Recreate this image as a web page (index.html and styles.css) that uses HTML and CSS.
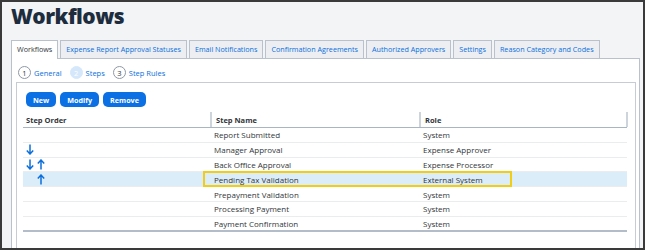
FILE: index.html
```html
<!DOCTYPE html>
<html lang="en">
<head>
  <meta charset="UTF-8"/>
  <title>Workflows</title>
  <link rel="stylesheet" href="styles.css">
</head>
<body>
  <div class="frame">
    <h1>Workflows</h1>
    <div class="tabs">
      <div class="tab active">Workflows</div>
      <div class="tab">Expense Report Approval Statuses</div>
      <div class="tab">Email Notifications</div>
      <div class="tab">Confirmation Agreements</div>
      <div class="tab">Authorized Approvers</div>
      <div class="tab">Settings</div>
      <div class="tab">Reason Category and Codes</div>
    </div>
    <div class="panel">
      <div class="steps">
        <div class="step"><span class="num">1</span>General</div>
        <div class="step"><span class="num current">2</span>Steps</div>
        <div class="step"><span class="num">3</span>Step Rules</div>
      </div>
      <div class="box">
        <div class="toolbar">
          <button class="btn">New</button>
          <button class="btn">Modify</button>
          <button class="btn">Remove</button>
        </div>
        <div class="grid">
          <div class="row head">
            <div class="cell">Step Order</div>
            <div class="cell">Step Name</div>
            <div class="cell">Role</div>
          </div>
          <div class="row">
            <div class="cell order"></div>
            <div class="cell">Report Submitted</div>
            <div class="cell">System</div>
          </div>
          <div class="row">
            <div class="cell order">
              <svg class="arrow" viewBox="0 0 8 11"><path d="M4 0.5V10 M0.8 6.6L4 10L7.2 6.6"/></svg>
            </div>
            <div class="cell">Manager Approval</div>
            <div class="cell">Expense Approver</div>
          </div>
          <div class="row">
            <div class="cell order">
              <svg class="arrow" viewBox="0 0 8 11"><path d="M4 0.5V10 M0.8 6.6L4 10L7.2 6.6"/></svg>
              <svg class="arrow" viewBox="0 0 8 11"><path d="M4 10.5V1 M0.8 4.4L4 1L7.2 4.4"/></svg>
            </div>
            <div class="cell">Back Office Approval</div>
            <div class="cell">Expense Processor</div>
          </div>
          <div class="row selected">
            <div class="cell order">
              <span class="slot"></span>
              <svg class="arrow" viewBox="0 0 8 11"><path d="M4 10.5V1 M0.8 4.4L4 1L7.2 4.4"/></svg>
            </div>
            <div class="cell">Pending Tax Validation</div>
            <div class="cell">External System</div>
          </div>
          <div class="row">
            <div class="cell order"></div>
            <div class="cell">Prepayment Validation</div>
            <div class="cell">System</div>
          </div>
          <div class="row">
            <div class="cell order"></div>
            <div class="cell">Processing Payment</div>
            <div class="cell">System</div>
          </div>
          <div class="row last">
            <div class="cell order"></div>
            <div class="cell">Payment Confirmation</div>
            <div class="cell">System</div>
          </div>
          <div class="mark"></div>
        </div>
      </div>
    </div>
  </div>
</body>
</html>
```

FILE: styles.css
```css
* {
  margin: 0;
  padding: 0;
  box-sizing: border-box;
}
body {
  font-family: 'Open Sans', sans-serif;
  color: #32363a;
}
.frame {
  width: 645px;
  height: 250px;
  overflow: hidden;
  border: 2px solid #3a3a3a;
  background: #f3f4f5;
  padding: 0 3px 0 9px;
}
h1 {
  font-size: 21px;
  font-weight: 800;
  line-height: 26px;
  color: #1d2d3e;
  margin: 1px 0 11px;
  letter-spacing: -0.5px;
}
.tabs {
  display: flex;
  gap: 2px;
  height: 18px;
  align-items: flex-end;
}
.tab {
  height: 18px;
  line-height: 17px;
  padding: 0 5px;
  font-size: 7.2px;
  color: #0b6fdc;
  background: #eceef1;
  border: 1px solid #b9c2cc;
  border-bottom: none;
  white-space: nowrap;
}
.tab.active {
  height: 19px;
  margin-bottom: -1px;
  background: #fff;
  color: #32363a;
  position: relative;
}
.panel {
  background: #fff;
  border: 1px solid #b9c2cc;
  padding: 7px 3px 0 4px;
  height: 200px;
}
.steps {
  display: flex;
  align-items: center;
  gap: 8px;
  padding-left: 2px;
  height: 13px;
  margin-bottom: 3px;
}
.step {
  display: flex;
  align-items: center;
  gap: 3px;
  font-size: 7.5px;
  color: #0b6fdc;
}
.num {
  width: 13px;
  height: 13px;
  border-radius: 50%;
  border: 1px solid #8e99a6;
  color: #32363a;
  font-size: 7.5px;
  display: flex;
  align-items: center;
  justify-content: center;
}
.num.current {
  background: #d5e8fb;
  border-color: #d5e8fb;
  color: #fff;
}
.box {
  border: 1px solid #c5ccd5;
  padding: 9px 8px 0 6px;
  height: 190px;
}
.toolbar {
  display: flex;
  gap: 4px;
  padding-left: 3px;
  margin-bottom: 5px;
}
.btn {
  height: 15px;
  padding: 0 7px;
  border: none;
  border-radius: 5px;
  background: #0b70e4;
  color: #fff;
  font-family: 'Open Sans', sans-serif;
  font-size: 7.2px;
  font-weight: 700;
}
.grid {
  position: relative;
}
.row {
  display: grid;
  grid-template-columns: 187px 209px 209px;
  height: 14.8px;
  border-bottom: 1px solid #ebecee;
  font-size: 8px;
  align-items: center;
}
.row .cell {
  padding-left: 4px;
  white-space: nowrap;
}
.row .cell.order {
  padding-left: 3px;
  display: flex;
  gap: 3px;
  align-items: center;
}
.row.head {
  height: 16px;
  border-bottom: 1px solid #aab5c2;
  font-size: 7.5px;
  font-weight: 700;
  align-items: stretch;
}
.row.head .cell {
  display: flex;
  align-items: center;
}
.row.head .cell:first-child {
  padding-left: 3px;
}
.row.head .cell + .cell {
  border-left: 2px solid #cdd4dc;
}
.row.head .cell:last-child {
  border-right: 2px solid #cdd4dc;
}
.row.selected {
  background: #dcedfa;
}
.row.last {
  border-bottom: 2px solid #b3bdc9;
}
.slot {
  width: 8px;
}
.arrow {
  width: 8px;
  height: 11px;
  fill: none;
  stroke: #0b6fdc;
  stroke-width: 1.5;
}
.mark {
  position: absolute;
  left: 180px;
  top: 59px;
  width: 309px;
  height: 16px;
  border: 2px solid #f2cd16;
}
```
